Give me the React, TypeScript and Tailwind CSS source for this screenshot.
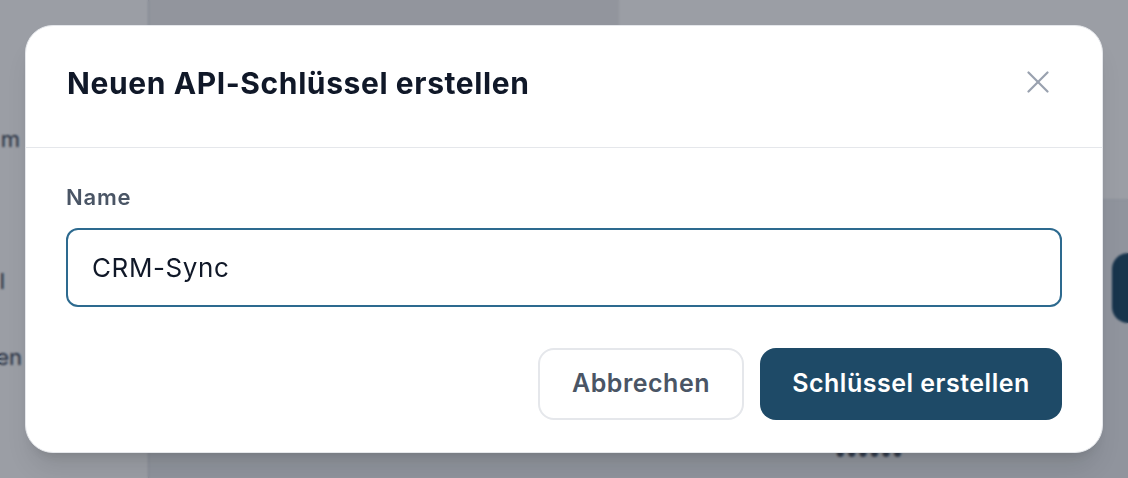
import React from "react";

const CloseIcon = () => (
  <svg
    xmlns="http://www.w3.org/2000/svg"
    width="22"
    height="22"
    viewBox="0 0 22 22"
    fill="none"
    stroke="currentColor"
    strokeWidth="2.2"
    strokeLinecap="round"
  >
    <path d="M1.5 1.5 20.5 20.5" />
    <path d="M20.5 1.5 1.5 20.5" />
  </svg>
);

const App = () => {
  return (
    <div className="relative w-full h-[478px] overflow-hidden font-['Inter','Liberation_Sans',sans-serif] [font-optical-sizing:none] [font-variation-settings:'opsz'_14]">
      {/* page behind the dialog */}
      <div className="flex h-full">
        <aside className="w-[149px] shrink-0 bg-white border-r border-gray-300 flex flex-col pt-[124px] text-[22px] text-gray-700">
          <div className="w-[200px] -ml-[180px] text-right leading-[30px]">Team</div>
          <div className="w-[200px] -ml-[195px] text-right leading-[30px] mt-[112px]">Modell</div>
          <div className="w-[200px] -ml-[178px] text-right leading-[30px] mt-[46px]">Einstellungen</div>
        </aside>
        <main className="flex-1 flex flex-col bg-[#eceef1]">
          <div className="flex h-[200px]">
            <div className="w-[470px] bg-[#f0f0f1]" />
            <div className="flex-1 bg-white border-b border-gray-200" />
          </div>
          <div className="flex justify-end pt-[53px]">
            <div className="w-[40px] h-[70px] -mr-[24px] rounded-[16px] bg-[#1e4a67]" />
          </div>
          <div className="flex pt-[117px] pl-[686px] text-[22px] leading-[24px] font-bold text-gray-600 tracking-[1px]">
            ••••••
          </div>
        </main>
      </div>

      {/* overlay + dialog */}
      <div className="absolute inset-0 bg-gray-900/[0.42] backdrop-blur-[1px] flex items-center justify-center">
        <div className="w-[1078px] h-[428px] bg-white rounded-[28px] border border-gray-200 shadow-xl flex flex-col">
          <div className="h-[122px] shrink-0 flex items-center justify-between pl-[41px] pr-[44px] pb-[6px] border-b border-gray-200">
            <h2 className="text-[30px] font-bold text-gray-900 tracking-[0.6px]">
              Neuen API-Schlüssel erstellen
            </h2>
            <button className="w-[40px] h-[40px] mb-[4px] flex items-center justify-center text-gray-400">
              <CloseIcon />
            </button>
          </div>
          <div className="flex flex-col px-[40px] pt-[35px]">
            <label className="text-[22px] leading-[28px] font-semibold text-gray-600 tracking-[0.8px]">
              Name
            </label>
            <input
              readOnly
              value="CRM-Sync"
              className="mt-[17px] h-[79px] w-full rounded-[12px] border-2 border-[#2d6a8f] pl-[24px] text-[26px] tracking-[0.6px] text-gray-900 outline-none"
            />
            <div className="flex justify-end gap-[16px] mt-[41px]">
              <button className="w-[206px] h-[72px] rounded-[16px] border-2 border-gray-200 bg-white text-[25px] tracking-[0.5px] font-semibold text-gray-600">
                Abbrechen
              </button>
              <button className="w-[302px] h-[72px] rounded-[16px] bg-[#1e4a67] text-[25px] tracking-[0.5px] font-semibold text-white">
                Schlüssel erstellen
              </button>
            </div>
          </div>
        </div>
      </div>
    </div>
  );
};

export default App;
